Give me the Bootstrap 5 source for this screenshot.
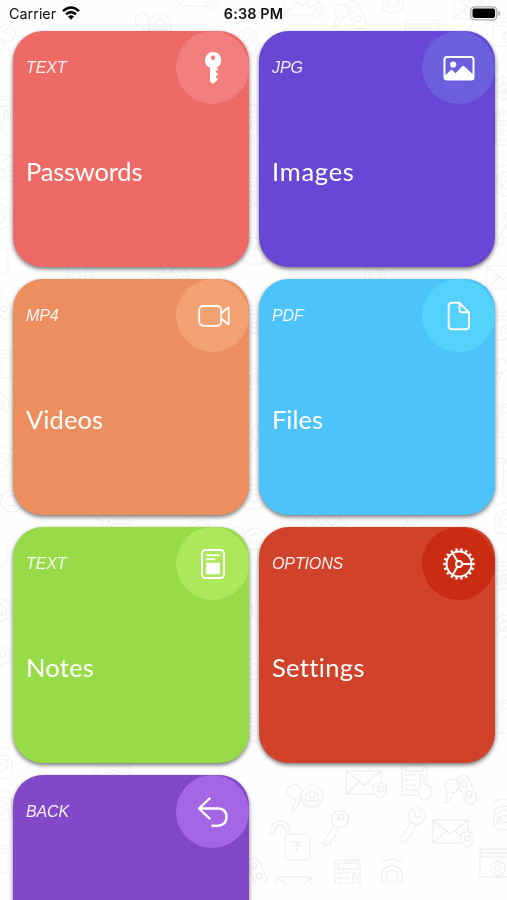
<!DOCTYPE html>
<html lang="en">
<head>
<meta charset="utf-8">
<meta name="viewport" content="width=device-width, initial-scale=1">
<title>Vault</title>
<link href="https://cdn.jsdelivr.net/npm/bootstrap@5.3.0/dist/css/bootstrap.min.css" rel="stylesheet">
<style>
  body { background: #fefefe; font-family: "Liberation Sans", Arial, sans-serif; }
  .screen { width: 507px; height: 900px; }
  .backdrop { top: 0; left: 0; opacity: .65; }
  .statusbar { height: 31px; padding: 0 6px 4px 6px; color: #111; font-family: Inter, sans-serif; font-size: 14.4px; display: grid; grid-template-columns: 1fr auto 1fr; }
  .carrier { gap: 6px; padding-left: 3px; }
  .clock { font-weight: 600; letter-spacing: .15px; }
  .tiles { display: grid; grid-template-columns: 236px 236px; grid-auto-rows: 236px; gap: 12px 10px; padding-left: 13px; }
  .tile { border-radius: 30px; color: #fff; box-shadow: 0 2px 4px rgba(0,0,0,.55); background: var(--tile); }
  .kind { font-size: 16px; font-style: italic; line-height: 20px; letter-spacing: -.12px; padding: 27px 0 0 13px; opacity: .92; }
  .bubble { width: 73px; height: 73px; background: var(--spot); }
  .corner { border-radius: 30px; overflow: hidden; }
  .title { font-family: Lato, sans-serif; font-size: 25.5px; line-height: 32px; padding: 77px 0 0 13px; letter-spacing: var(--track); }
  .passwords { --tile: #ee6a67; --spot: #f07f7e; --track: -.2px; }
  .images { --tile: #6747d3; --spot: #6b5fdd; --track: .75px; }
  .videos { --tile: #ec8e5d; --spot: #f2a172; --track: .1px; }
  .files { --tile: #4cc3fa; --spot: #55d2fb; --track: 0; }
  .notes { --tile: #97dc48; --spot: #ace859; --track: .25px; }
  .settings { --tile: #d1422a; --spot: #c92c13; --track: .35px; }
  .back { --tile: #8348c7; --spot: #a566e6; }
</style>
<script src="https://cdn.jsdelivr.net/npm/bootstrap@5.3.0/dist/js/bootstrap.bundle.min.js"></script>
</head>
<body class="overflow-hidden">
<div class="screen position-relative overflow-hidden">
  <svg class="backdrop position-absolute" width="507" height="884" viewBox="0 0 507 884" fill="none" stroke="#e4e4e4" stroke-width="1.1" stroke-linejoin="round" stroke-linecap="round" aria-hidden="true">
    <defs>
      <g id="mail"><path d="M0 0h35v23H0zM0 0l17.500 14L35 0M0 23l13-12M35 23L22 11"/><path fill="#fefefe" d="M28 14l6-3 6 3v6q-1 5-6 7q-5-2-6-7z"/><rect x="32" y="16" width="5" height="5"/></g>
      <g id="keyicon"><circle cx="17" cy="8" r="8.500"/><circle cx="18" cy="6" r="3"/><path d="M11 14L0 32l2 3 5-2 1-4 3-1 1-4 5-8"/></g>
      <g id="lockopen"><rect x="15" y="13" width="25" height="26" rx="4"/><path d="M4 13H0Q0 0 11 0q9 0 9 12M16 13q0-9-6-9-5 0-6 9M22 21h10M27 21v10M24 24h6"/></g>
      <g id="pad"><path d="M0 0h25v33H0zM3 3h19v6H3zM3 13h4M10 13h4M17 13h4M3 18h4M10 18h4M17 18h4M3 23h4M10 23h4M3 28h4M10 28h4"/><path fill="#fefefe" d="M18 33l-4-6 4-1V15q2-2 4 0v7l7 3v8l-3 4h-6z"/></g>
      <g id="house"><circle cx="20" cy="14" r="11"/><path d="M14 13l6-5 6 5v6H14zM18 19v-4h4v4M9 8a7 7 0 1 0-5 8L0 29l4-2 5-12"/></g>
      <g id="fob"><circle cx="7" cy="11" r="7"/><path d="M3 17L0 28l4-2 5-9M13 4q6-7 11 0l8 18q0 6-6 7-4 0-6-4l-7-15z"/><circle cx="19" cy="9" r="3"/><circle cx="24" cy="19" r="3"/></g>
      <g id="finger"><path d="M0 3q10-6 20 0M0 28V17q0-10 10-10t10 10v9q-4 5-10 5T0 28M4 25v-8q0-6 6-6t6 6v6"/><circle cx="10" cy="20" r="4"/></g>
      <g id="web"><path d="M0 0h34v28H0zM0 8h34M0 4h34"/><path fill="#fefefe" d="M11 15l7-3 7 3v6q-2 5-7 6-5-1-7-6z"/><circle cx="18" cy="19" r="3"/></g>
    </defs>
    <use href="#mail" x="346" y="771"/><use href="#pad" x="402" y="762"/><use href="#house" x="292" y="782"/><use href="#fob" x="445" y="775"/>
    <use href="#lockopen" x="270" y="821"/><use href="#keyicon" x="323" y="811"/><use href="#keyicon" x="400" y="808"/><use href="#mail" x="433" y="820"/>
    <use href="#finger" x="494" y="799"/><use href="#pad" x="335" y="860"/><use href="#finger" x="382" y="859"/><use href="#mail" x="277" y="877"/><use href="#web" x="480" y="849"/><use href="#fob" x="235" y="857"/>
    <g opacity=".7">
      <use href="#mail" x="178" y="-17"/><use href="#house" x="140" y="11"/><use href="#mail" x="284" y="-8"/><use href="#fob" x="334" y="0"/><use href="#finger" x="383" y="-18"/><use href="#web" x="405" y="20"/><use href="#mail" x="454" y="-4"/><use href="#finger" x="238" y="22"/>
      <use href="#keyicon" x="-10" y="25"/><use href="#pad" x="-14" y="97"/><use href="#mail" x="-24" y="155"/><use href="#finger" x="-10" y="198"/><use href="#lockopen" x="-32" y="235"/><use href="#fob" x="-20" y="290"/><use href="#web" x="-23" y="350"/><use href="#house" x="-22" y="390"/><use href="#finger" x="-8" y="446"/><use href="#house" x="-8" y="487"/><use href="#lockopen" x="-33" y="527"/><use href="#house" x="-20" y="596"/><use href="#keyicon" x="-15" y="648"/><use href="#finger" x="-8" y="748"/><use href="#web" x="-26" y="845"/><use href="#finger" x="-8" y="790"/>
      <use href="#web" x="493" y="18"/><use href="#house" x="484" y="74"/><use href="#pad" x="496" y="112"/><use href="#finger" x="497" y="165"/><use href="#keyicon" x="496" y="210"/><use href="#mail" x="486" y="266"/><use href="#web" x="490" y="312"/><use href="#fob" x="494" y="355"/><use href="#pad" x="498" y="404"/><use href="#lockopen" x="488" y="458"/><use href="#finger" x="495" y="503"/><use href="#web" x="486" y="562"/><use href="#house" x="485" y="612"/><use href="#pad" x="498" y="700"/>
      <use href="#finger" x="245" y="105"/><use href="#web" x="238" y="178"/><use href="#lockopen" x="228" y="225"/><use href="#web" x="236" y="306"/><use href="#house" x="236" y="365"/><use href="#keyicon" x="243" y="425"/><use href="#finger" x="244" y="478"/><use href="#house" x="235" y="525"/><use href="#fob" x="239" y="600"/><use href="#house" x="235" y="655"/><use href="#web" x="237" y="714"/>
      <use href="#mail" x="150" y="260"/><use href="#house" x="100" y="505"/><use href="#finger" x="190" y="514"/><use href="#mail" x="305" y="510"/><use href="#keyicon" x="396" y="507"/><use href="#pad" x="68" y="255"/><use href="#finger" x="365" y="258"/><use href="#web" x="96" y="758"/>
    </g>
  </svg>

  <div class="position-relative">
    <header class="statusbar align-items-center">
      <div class="carrier d-flex align-items-center">
        <span>Carrier</span>
        <svg width="18" height="14" viewBox="0 0 18 14" fill="none" stroke="#000" stroke-width="2.500" aria-hidden="true"><path d="M1 5.200Q9-2.100 17 5.200M4 8.300q5-4.400 10 0"/><path d="M6 10.600q3-2.500 6 0L9 13.700z" fill="#000" stroke="none"/></svg>
      </div>
      <div class="clock">6:38 PM</div>
      <svg class="ms-auto" width="31" height="15" viewBox="0 0 31 15" aria-hidden="true"><rect x=".8" y=".8" width="26" height="13" rx="3.800" fill="#fff" stroke="#aaa" stroke-width="1.300"/><rect x="2.500" y="2.500" width="22.600" height="9.600" rx="2" fill="#000"/><path d="M28.300 5q2 .5 2 2.400t-2 2.400z" fill="#aaa"/></svg>
    </header>

    <main class="tiles">
      <section class="tile passwords position-relative">
        <div class="corner position-absolute top-0 end-0"><div class="bubble rounded-circle d-flex align-items-center justify-content-center">
          <svg width="36" height="36" viewBox="0 0 36 36" aria-hidden="true"><path fill="#fff" fill-rule="evenodd" d="M18 2a8.200 8.200 0 0 0-3 15.800V31.500L18 34l5-4.600-2.500-2.700 2.700-2.500-2.500-2.800 2.600-2.500-1.800-1.300A8.200 8.200 0 0 0 18 2zm0 3.500a2.200 2.200 0 1 1 0 4.400 2.200 2.200 0 0 1 0-4.400z"/></svg>
        </div></div>
        <div class="kind">TEXT</div><div class="title">Passwords</div>
      </section>
      <section class="tile images position-relative">
        <div class="corner position-absolute top-0 end-0"><div class="bubble rounded-circle d-flex align-items-center justify-content-center">
          <svg width="36" height="36" viewBox="0 0 36 36" aria-hidden="true"><rect x="3.500" y="7" width="29" height="22.500" rx="2.500" fill="none" stroke="#fff" stroke-width="2"/><circle cx="12.200" cy="14.500" r="3.100" fill="#fff"/><path fill="#fff" d="M4 25.500l5.700-5.300q.8-.7 1.600 0l3.200 3.100 6.700-7q1-.9 2 0l9 8.400v4q0 1-1 1H5q-1 0-1-1z"/></svg>
        </div></div>
        <div class="kind">JPG</div><div class="title">Images</div>
      </section>
      <section class="tile videos position-relative">
        <div class="corner position-absolute top-0 end-0"><div class="bubble rounded-circle d-flex align-items-center justify-content-center">
          <svg width="36" height="36" viewBox="0 0 36 36" fill="none" stroke="#fff" stroke-width="1.800" stroke-linejoin="round" aria-hidden="true"><rect x="4.200" y="8" width="22" height="19.800" rx="4.200"/><path d="M26.200 15.500l6.500-5.700q1-.6 1 .6v15q0 1.200-1 .6l-6.500-5.700"/></svg>
        </div></div>
        <div class="kind">MP4</div><div class="title">Videos</div>
      </section>
      <section class="tile files position-relative">
        <div class="corner position-absolute top-0 end-0"><div class="bubble rounded-circle d-flex align-items-center justify-content-center">
          <svg width="36" height="36" viewBox="0 0 36 36" fill="none" stroke="#fff" stroke-width="1.900" stroke-linejoin="round" aria-hidden="true"><path d="M11 4.800h7.500L28 14.300v13.600q0 3.300-3.300 3.300H11q-3.300 0-3.300-3.300V8.100q0-3.300 3.300-3.300zM18.500 4.800V12q0 2.300 2.300 2.300H28"/></svg>
        </div></div>
        <div class="kind">PDF</div><div class="title">Files</div>
      </section>
      <section class="tile notes position-relative">
        <div class="corner position-absolute top-0 end-0"><div class="bubble rounded-circle d-flex align-items-center justify-content-center">
          <svg width="36" height="36" viewBox="0 0 36 36" fill="none" stroke="#fff" stroke-width="2" stroke-linecap="round" aria-hidden="true"><rect x="7" y="4" width="22" height="28" rx="3.500"/><path d="M12 9.300h12M12 13.200h7.500"/><rect x="11" y="16.800" width="14" height="11.500" rx="1" fill="#fff" stroke="none"/></svg>
        </div></div>
        <div class="kind">TEXT</div><div class="title">Notes</div>
      </section>
      <section class="tile settings position-relative">
        <div class="corner position-absolute top-0 end-0"><div class="bubble rounded-circle d-flex align-items-center justify-content-center">
          <svg width="36" height="36" viewBox="0 0 36 36" fill="none" stroke="#fff" stroke-width="2" aria-hidden="true"><circle cx="18" cy="18" r="12.500"/><circle cx="18" cy="18" r="14.500" stroke-width="2.400" pathLength="72" stroke-dasharray="1.900 2.100" stroke-dashoffset=".95"/><circle cx="18" cy="18" r="3"/><path d="M21 18h10M16.500 15.400l-5-8.700M16.500 20.600l-5 8.700"/></svg>
        </div></div>
        <div class="kind">OPTIONS</div><div class="title">Settings</div>
      </section>
      <section class="tile back position-relative">
        <div class="corner position-absolute top-0 end-0"><div class="bubble rounded-circle d-flex align-items-center justify-content-center">
          <svg width="36" height="36" viewBox="0 0 36 36" fill="none" stroke="#fff" stroke-width="2.400" stroke-linecap="round" stroke-linejoin="round" aria-hidden="true"><path d="M14.500 4.500L4 14.500l10.500 10M4.500 14.500h19q8 .5 8 8.600t-8.500 8.700h-5.500"/></svg>
        </div></div>
        <div class="kind">BACK</div>
      </section>
    </main>
  </div>
</div>
</body>
</html>
